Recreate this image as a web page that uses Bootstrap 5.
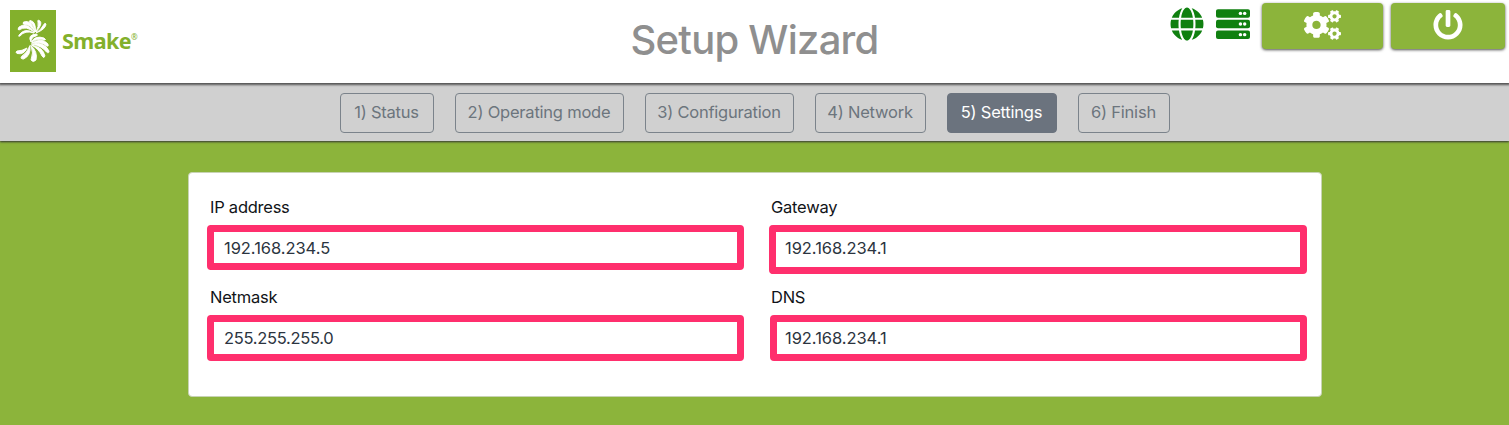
<!DOCTYPE html>
<html lang="en">
<head>
<meta charset="utf-8">
<title>Setup Wizard</title>
<link rel="stylesheet" href="https://cdn.jsdelivr.net/npm/bootstrap@5.3.0/dist/css/bootstrap.min.css">
<style>
  body { background: #8cb43b; font-family: Inter, "Liberation Sans", sans-serif; font-size: 16.5px; min-height: 425px; overflow: hidden; }
  .topbar { height: 83px; display: grid; grid-template-columns: 1fr auto 1fr; position: relative; z-index: 2; box-shadow: 0 1px 2px 1px #555; }
  .brand-box { padding: 10px 0 0 10px; }
  .brand-name { font: 700 21.5px "Noto Sans", sans-serif; color: #83b02c; margin: 0 0 0 6px; line-height: 62px; letter-spacing: -.55px; }
  .brand-name sup { font-size: 8px; font-weight: 400; top: -9px; }
  .page-title { color: #8f8f8f; font-size: 40px; font-weight: 500; line-height: 48px; margin-top: 16px; letter-spacing: -.75px; }
  .tools { padding: 3px 4px 0 0; }
  .status-icon { fill: #108010; margin: 4px 12px 0 0; }
  .btn-tool { background: #8cb43b; border-radius: 4px; height: 46px; padding: 0; border: 0; box-shadow: 0 1px 3px rgba(0,0,0,.7); }
  .btn-tool svg { fill: #fff; display: block; margin: -2px auto 0; }
  .btn-gears { width: 121px; margin-right: 8px; }
  .btn-power { width: 114px; }
  .steps { height: 57.500px; background: #d0d0d0; gap: 21px; padding-top: 9.5px; position: relative; z-index: 1; box-shadow: 0 1px 2px #333; }
  .steps .btn { --bs-btn-color: #6c757d; --bs-btn-border-color: #7b838b; height: 40px; padding: 0; font-size: 16.5px; line-height: 37px; border-radius: 4px; letter-spacing: -.22px; }
  .steps .btn.active { background: #6b737e; border-color: #6b737e; }
  .settings { width: 1134px; height: 225px; margin: 31.5px auto 0 188px; border: 1px solid #c8d3b4; border-radius: 4px; padding: 24px 14px 0 18px; }
  .field-grid { display: grid; grid-template-columns: 537px 538px; column-gap: 25px; grid-template-rows: 90px 90px; }
  .field-grid label { display: block; line-height: 21px; height: 28px; padding-left: 3px; color: #111418; letter-spacing: -.25px; }
  .field-grid .form-control { border: 7px solid #ff2f6d; border-radius: 4px; padding: 0 9px 0 10px; font-size: 16.5px; line-height: 24px; color: #2b3440; height: 45px; letter-spacing: -.05px; }
  .field-grid .tall { height: 49px; padding-bottom: 4px; padding-left: 9px; }
  .field-grid .mask { height: 46px; letter-spacing: -.3px; }
  .field-grid .dns { height: 46px; width: 537px; margin-left: 1px; padding-left: 8px; }
  .gw-col label { padding-left: 2px; }
</style>
</head>
<body>
<header class="topbar bg-white">
  <div class="brand-box d-flex align-items-start">
    <svg width="46" height="62" viewBox="0 0 46 62">
      <rect width="46" height="62" fill="#83b02c"/>
      <g fill="#fff" stroke="#fff" stroke-linejoin="round" stroke-width=".9">
        <path d="M24 23Q15 17 9 25Q8 27 10 26Q15 20 24 23Z"/>
        <path d="M24.500 22.500Q17 11 9 17Q7 20 9 20Q16 15 24.500 22.500Z"/>
        <path d="M25 22Q21 9 13.500 12Q12 14 15 14.500Q20 14 25 22Z"/>
        <path d="M25.500 22Q26 11 20 10.500Q18 11 20.500 13Q24 15 25.500 22Z"/>
        <path d="M26 22Q33 14 30 11Q27 9 28 12Q29 16 26 22Z"/>
        <path d="M26 23Q36 19 36 14Q35 12 33.500 15Q31 20 26 23Z"/>
        <path d="M21 32Q17 25 26 24Q29 25 26 26Q21 27 21 32Z"/>
        <path d="M21.500 32Q25 25 34 28Q37 30 34 30Q27 28 21.500 32Z"/>
        <path d="M21.500 33Q32 27 38 34Q39 37 36.500 36Q31 31 21.500 33Z"/>
        <path d="M21.500 34Q34 31 39 41Q39 44 36.500 42Q32 36 21.500 34Z"/>
        <path d="M21.500 35Q33 37 35 46Q34 49 32 46Q29 39 21.500 35Z"/>
        <path d="M21 35.500Q28 42 26 50Q23 53 21 50Q24 43 21 35.500Z"/>
        <path d="M20 35.500Q21 46 13.500 49Q10 49 11.500 46.500Q17 43 20 35.500Z"/>
        <path d="M17 38Q14 45 7 43.500Q5 42 7 41Q12 41 17 38Z"/>
      </g>
    </svg>
    <div class="brand-name">Smake<sup>®</sup></div>
  </div>
  <h1 class="page-title mb-0">Setup Wizard</h1>
  <div class="tools d-flex justify-content-end align-items-start">
    <svg class="status-icon" width="34" height="34" viewBox="0 0 496 512"><path d="M336.500 160C322 70.700 287.800 8 248 8s-74 62.700-88.500 152h177zM152 256c0 22.200 1.200 43.500 3.300 64h185.300c2.100-20.500 3.300-41.800 3.300-64s-1.200-43.500-3.300-64H155.300c-2.100 20.500-3.300 41.800-3.300 64zm324.700-96c-28.600-67.900-86.500-120.400-158-141.600 24.400 33.800 41.200 84.700 50 141.600h108zM177.200 18.400C105.800 39.600 47.800 92.100 19.300 160h108c8.700-56.900 25.500-107.800 49.900-141.600zM487.400 192H372.700c2.100 21 3.300 42.500 3.300 64s-1.200 43-3.300 64h114.600c5.500-20.500 8.600-41.800 8.600-64s-3.100-43.500-8.500-64zM120 256c0-21.500 1.200-43 3.300-64H8.600C3.200 212.500 0 233.800 0 256s3.200 43.500 8.600 64h114.600c-2-21-3.200-42.500-3.200-64zm39.500 96c14.500 89.300 48.700 152 88.500 152s74-62.700 88.500-152h-177zm159.300 141.600c71.400-21.200 129.400-73.700 158-141.600h-108c-8.800 56.900-25.600 107.800-50 141.600zM19.300 352c28.600 67.900 86.500 120.400 158 141.600-24.400-33.800-41.200-84.700-50-141.600h-108z"/></svg>
    <svg class="status-icon" width="34" height="34" viewBox="0 0 512 512">
      <rect y="32" width="512" height="128" rx="30"/><rect y="192" width="512" height="128" rx="30"/><rect y="352" width="512" height="128" rx="30"/>
      <g fill="#fff"><circle cx="368" cy="96" r="26"/><circle cx="432" cy="96" r="26"/><circle cx="368" cy="256" r="26"/><circle cx="432" cy="256" r="26"/><circle cx="368" cy="416" r="26"/><circle cx="432" cy="416" r="26"/></g>
    </svg>
    <button class="btn btn-tool btn-gears" aria-label="Configuration">
      <svg width="37" height="30" viewBox="0 0 640 512"><path id="smallgear" d="M512.100 191l-8.200 14.300c-3 5.300-9.400 7.500-15.100 5.400-11.800-4.400-22.600-10.700-32.100-18.600-4.600-3.800-5.800-10.500-2.800-15.700l8.200-14.300c-6.900-8-12.300-17.300-15.900-27.400h-16.500c-6 0-11.200-4.300-12.200-10.300-2-12-2.100-24.600 0-37.100 1-6 6.200-10.400 12.200-10.400h16.500c3.600-10.100 9-19.400 15.900-27.400l-8.200-14.300c-3-5.200-1.900-11.900 2.800-15.700 9.500-7.900 20.400-14.200 32.100-18.600 5.700-2.100 12.100.1 15.100 5.400l8.200 14.300c10.500-1.900 21.200-1.900 31.700 0L552 6.300c3-5.300 9.400-7.500 15.100-5.400 11.800 4.400 22.600 10.700 32.100 18.600 4.600 3.800 5.800 10.500 2.800 15.700l-8.200 14.300c6.900 8 12.300 17.300 15.900 27.400h16.500c6 0 11.200 4.300 12.200 10.300 2 12 2.100 24.600 0 37.100-1 6-6.200 10.400-12.200 10.400h-16.500c-3.600 10.100-9 19.400-15.900 27.400l8.200 14.300c3 5.200 1.900 11.900-2.800 15.700-9.500 7.900-20.400 14.200-32.100 18.600-5.700 2.100-12.100-.1-15.100-5.400l-8.200-14.300c-10.400 1.900-21.200 1.900-31.700 0zm-10.500-58.800c38.500 29.600 82.400-14.300 52.800-52.800-38.500-29.700-82.400 14.300-52.800 52.800z"/><use href="#smallgear" y="299"/><path d="M386.300 286.100l33.700 16.800c10.100 5.800 14.500 18.100 10.500 29.100-8.900 24.200-26.400 46.400-42.600 65.800-7.400 8.900-20.200 11.100-30.300 5.300l-29.100-16.800c-16 13.700-34.600 24.600-54.900 31.700v33.600c0 11.600-8.300 21.600-19.700 23.600-24.600 4.200-50.400 4.400-75.900 0-11.500-2-20-11.900-20-23.600V418c-20.300-7.200-38.900-18-54.900-31.700L74 403c-10 5.800-22.900 3.600-30.300-5.300-16.200-19.400-33.300-41.600-42.200-65.700-4-10.900.4-23.200 10.500-29.100l33.300-16.800c-3.900-20.900-3.900-42.400 0-63.400L12 205.800c-10.100-5.800-14.600-18.100-10.500-29 8.900-24.200 26-46.400 42.200-65.800 7.400-8.900 20.200-11.100 30.300-5.300l29.100 16.800c16-13.700 34.600-24.600 54.900-31.700V57.100c0-11.500 8.200-21.500 19.600-23.500 24.600-4.200 50.500-4.400 76-.1 11.500 2 20 11.900 20 23.600v33.600c20.300 7.200 38.900 18 54.900 31.700l29.100-16.800c10-5.800 22.900-3.600 30.300 5.300 16.200 19.400 33.200 41.600 42.100 65.800 4 10.900.1 23.200-10 29.100l-33.700 16.800c3.900 21 3.900 42.500 0 63.500zm-117.600 21.100c59.200-77-28.700-164.900-105.700-105.700-59.200 77 28.700 164.900 105.700 105.700z"/></svg>
    </button>
    <button class="btn btn-tool btn-power" aria-label="Power">
      <svg width="30" height="30" viewBox="0 0 512 512"><path d="M400 54.100c63 45 104 118.600 104 201.900 0 136.800-110.800 247.700-247.500 248C120 504.300 8.200 393 8 256.400 7.900 173.100 48.900 99.300 111.800 54.200c11.700-8.300 28-4.800 35 7.700L162.600 90c5.900 10.500 3.100 23.800-6.600 31-41.500 30.800-68 79.600-68 134.900-.1 92.300 74.500 168.100 168 168.100 91.600 0 168.600-74.200 168-169.100-.3-51.800-24.700-101.800-68.100-134-9.700-7.200-12.400-20.500-6.500-30.900l15.800-28.100c7-12.400 23.200-16.100 34.800-7.800zM296 264V24c0-13.300-10.700-24-24-24h-32c-13.300 0-24 10.700-24 24v240c0 13.300 10.700 24 24 24h32c13.300 0 24-10.700 24-24z"/></svg>
    </button>
  </div>
</header>
<nav class="steps d-flex justify-content-center align-items-start">
  <button class="btn btn-outline-secondary" style="width:94px">1) Status</button>
  <button class="btn btn-outline-secondary" style="width:169px">2) Operating mode</button>
  <button class="btn btn-outline-secondary" style="width:149px">3) Configuration</button>
  <button class="btn btn-outline-secondary" style="width:111px">4) Network</button>
  <button class="btn btn-outline-secondary active" style="width:110px">5) Settings</button>
  <button class="btn btn-outline-secondary" style="width:92px">6) Finish</button>
</nav>
<main class="settings bg-white">
  <form class="field-grid">
    <div><label for="ip">IP address</label><input id="ip" class="form-control" value="192.168.234.5"></div>
    <div class="gw-col"><label for="gw">Gateway</label><input id="gw" class="form-control tall" value="192.168.234.1"></div>
    <div><label for="mask">Netmask</label><input id="mask" class="form-control mask" value="255.255.255.0"></div>
    <div class="gw-col"><label for="dns">DNS</label><input id="dns" class="form-control dns" value="192.168.234.1"></div>
  </form>
</main>
<script src="https://cdn.jsdelivr.net/npm/bootstrap@5.3.0/dist/js/bootstrap.bundle.min.js"></script>
</body>
</html>
